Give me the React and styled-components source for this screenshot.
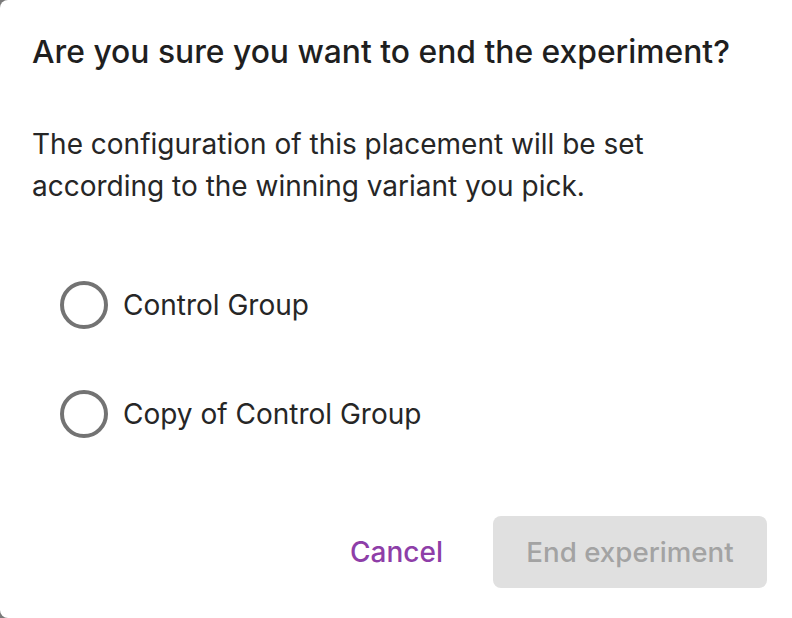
import React, { useState } from "react";
import styled, { createGlobalStyle } from "styled-components";

const GlobalStyle = createGlobalStyle`
  html, body {
    margin: 0;
    padding: 0;
    background: #7a7a7a;
    overflow: hidden;
  }
  body {
    font-family: Inter, "Noto Sans", sans-serif;
    -webkit-font-smoothing: antialiased;
  }
`;

const Dialog = styled.div`
  width: 812px;
  height: 618px;
  box-sizing: border-box;
  background: #fff;
  border-radius: 8px;
  padding: 30px 32px 0 32px;
  display: flex;
  flex-direction: column;
`;

const Title = styled.h2`
  margin: 0;
  font-size: 31.8px;
  font-weight: 500;
  line-height: 44px;
  color: #1f1f1f;
  white-space: nowrap;
`;

const Body = styled.p`
  margin: 49px 0 0 0;
  font-size: 28px;
  font-weight: 400;
  line-height: 42px;
  color: #262626;
  width: 660px;
`;

const Options = styled.div`
  display: flex;
  flex-direction: column;
  gap: 61px;
  margin-top: 74px;
  padding-left: 28px;
`;

const Option = styled.label`
  display: flex;
  align-items: center;
  gap: 15px;
  cursor: pointer;
  font-size: 28px;
  color: #262626;
  height: 48px;
`;

const Radio = styled.span`
  width: 40px;
  height: 40px;
  flex: none;
  border-radius: 50%;
  border: 4px solid ${(p) => (p.$checked ? "#8e3ea8" : "#737373")};
  display: flex;
  align-items: center;
  justify-content: center;
  &::after {
    content: "";
    width: 20px;
    height: 20px;
    border-radius: 50%;
    background: #8e3ea8;
    display: ${(p) => (p.$checked ? "block" : "none")};
  }
`;

const Actions = styled.div`
  margin-top: auto;
  margin-bottom: 30px;
  margin-right: 13px;
  display: flex;
  justify-content: flex-end;
  align-items: center;
  gap: 50px;
`;

const TextButton = styled.button`
  background: none;
  border: none;
  padding: 0;
  font-family: inherit;
  font-size: 28px;
  font-weight: 500;
  color: #8e3ea8;
  cursor: pointer;
`;

const PrimaryButton = styled.button`
  width: 274px;
  height: 72px;
  border: none;
  border-radius: 8px;
  background: ${(p) => (p.disabled ? "#e0e0e0" : "#8e3ea8")};
  color: ${(p) => (p.disabled ? "#a3a3a3" : "#fff")};
  font-family: inherit;
  font-size: 27.7px;
  font-weight: 500;
`;

const variants = ["Control Group", "Copy of Control Group"];

export default function App() {
  const [picked, setPicked] = useState(null);
  return (
    <>
      <GlobalStyle />
      <Dialog>
        <Title>Are you sure you want to end the experiment?</Title>
        <Body>
          The configuration of this placement will be set according to the
          winning variant you pick.
        </Body>
        <Options>
          {variants.map((v) => (
            <Option key={v} onClick={() => setPicked(v)}>
              <Radio $checked={picked === v} />
              {v}
            </Option>
          ))}
        </Options>
        <Actions>
          <TextButton>Cancel</TextButton>
          <PrimaryButton disabled={picked === null}>End experiment</PrimaryButton>
        </Actions>
      </Dialog>
    </>
  );
}
